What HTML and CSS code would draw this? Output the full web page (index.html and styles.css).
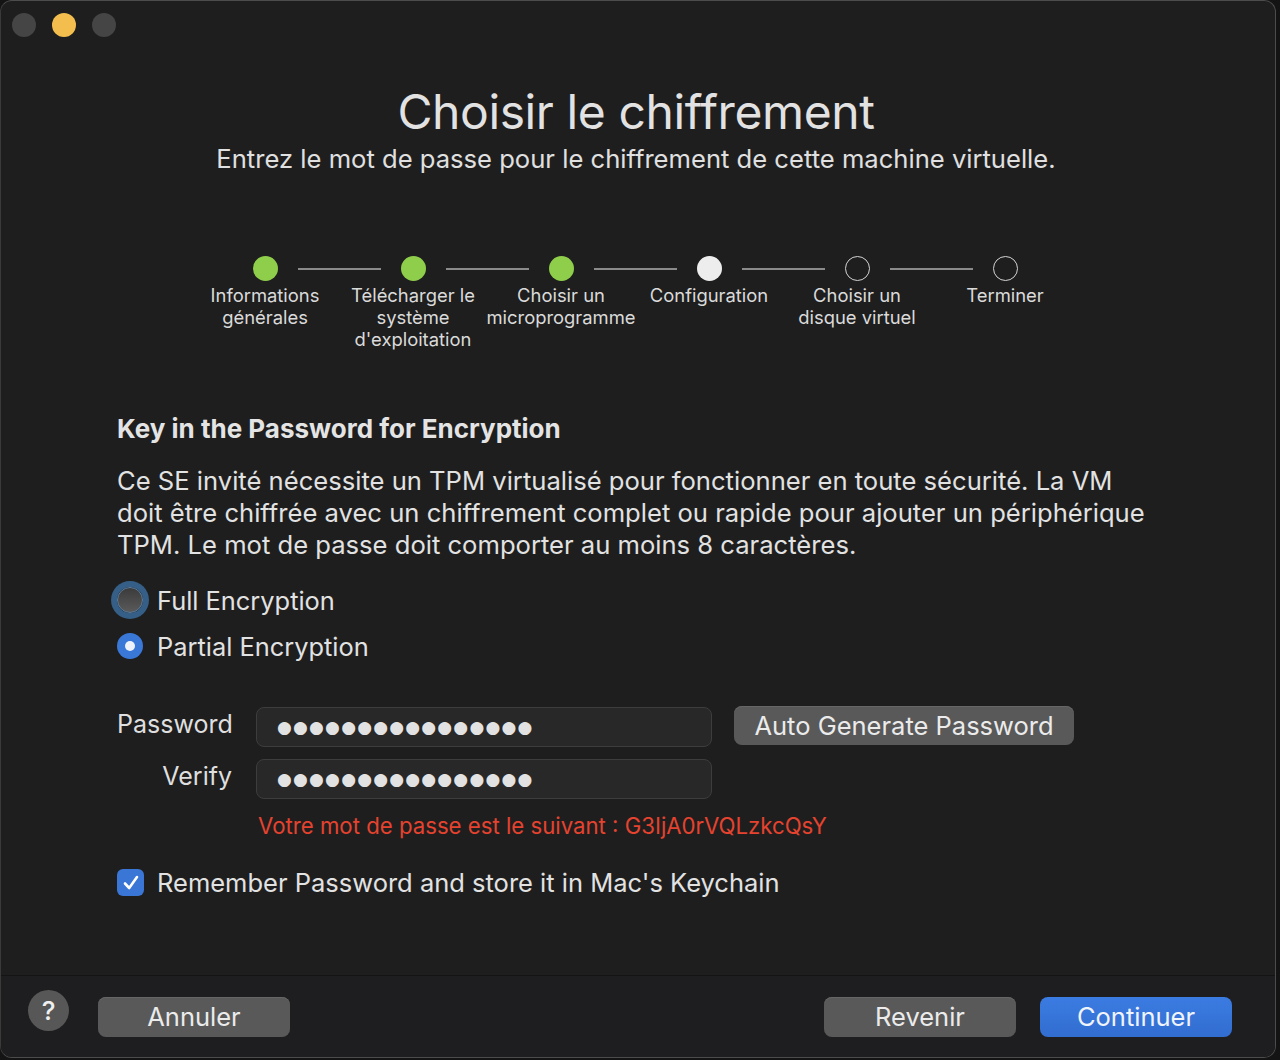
FILE: index.html
```html
<!DOCTYPE html>
<html lang="fr">
<head>
<meta charset="utf-8">
<title>Choisir le chiffrement</title>
<link rel="stylesheet" href="styles.css">
</head>
<body>
<div class="window">
  <div class="titlebar">
    <span class="light light-gray"></span>
    <span class="light light-yellow"></span>
    <span class="light light-gray"></span>
  </div>

  <div class="content">
    <header class="header">
      <h1 class="title">Choisir le chiffrement</h1>
      <p class="subtitle">Entrez le mot de passe pour le chiffrement de cette machine virtuelle.</p>
    </header>

    <ol class="steps">
      <li class="step done first"><div class="step-top"><span class="dot"></span></div><div class="step-label">Informations générales</div></li>
      <li class="step done"><div class="step-top"><span class="dot"></span></div><div class="step-label">Télécharger le système d'exploitation</div></li>
      <li class="step done"><div class="step-top"><span class="dot"></span></div><div class="step-label">Choisir un microprogramme</div></li>
      <li class="step current"><div class="step-top"><span class="dot"></span></div><div class="step-label">Configuration</div></li>
      <li class="step todo"><div class="step-top"><span class="dot"></span></div><div class="step-label">Choisir un disque virtuel</div></li>
      <li class="step todo last"><div class="step-top"><span class="dot"></span></div><div class="step-label">Terminer</div></li>
    </ol>

    <section class="form">
      <h2 class="form-title">Key in the Password for Encryption</h2>
      <p class="form-text">Ce SE invité nécessite un TPM virtualisé pour fonctionner en toute sécurité. La VM doit être chiffrée avec un chiffrement complet ou rapide pour ajouter un périphérique TPM. Le mot de passe doit comporter au moins 8 caractères.</p>

      <div class="radios">
        <label class="radio-row"><span class="radio radio-focus"><span class="radio-inner"></span></span><span class="radio-text">Full Encryption</span></label>
        <label class="radio-row"><span class="radio radio-on"><span class="radio-dot"></span></span><span class="radio-text">Partial Encryption</span></label>
      </div>

      <div class="fields">
        <div class="field-row">
          <span class="field-label">Password</span>
          <div class="input">●●●●●●●●●●●●●●●●</div>
          <button class="btn btn-gray btn-auto">Auto Generate Password</button>
        </div>
        <div class="field-row">
          <span class="field-label">Verify</span>
          <div class="input">●●●●●●●●●●●●●●●●</div>
        </div>
        <div class="hint">Votre mot de passe est le suivant : G3IjA0rVQLzkcQsY</div>
      </div>

      <label class="check-row">
        <span class="checkbox"><svg width="20" height="20" viewBox="0 0 20 20"><path d="M4 10.5 L8.2 15 L16 4" fill="none" stroke="#ffffff" stroke-width="2.6" stroke-linecap="round" stroke-linejoin="round"/></svg></span>
        <span class="check-text">Remember Password and store it in Mac's Keychain</span>
      </label>
    </section>
  </div>

  <footer class="footer">
    <button class="help">?</button>
    <button class="btn btn-gray btn-foot">Annuler</button>
    <div class="spacer"></div>
    <button class="btn btn-gray btn-foot">Revenir</button>
    <button class="btn btn-blue btn-foot">Continuer</button>
  </footer>
</div>
</body>
</html>
```

FILE: styles.css
```css
* { box-sizing: border-box; }

html, body {
  margin: 0;
  padding: 0;
}

body {
  background: #141414;
  width: 1280px;
  height: 1060px;
  overflow: hidden;
  font-family: Inter, "Noto Sans", "Liberation Sans", sans-serif;
  color: #e3e3e3;
}

.window {
  width: 1276px;
  height: 1058px;
  background: #1e1e1e;
  border: 1px solid #4c4c4c;
  border-left-color: #3a3a3a;
  border-radius: 12px;
  display: flex;
  flex-direction: column;
  overflow: hidden;
}

.titlebar {
  height: 47px;
  display: flex;
  align-items: center;
  gap: 16px;
  padding-left: 11px;
  flex: none;
}

.light {
  width: 24px;
  height: 24px;
  border-radius: 50%;
}
.light-gray { background: #454545; }
.light-yellow { background: #f4be4f; }

.content {
  flex: 1;
  display: flex;
  flex-direction: column;
}

.header {
  text-align: center;
  padding-right: 4px;
}

.title {
  margin: 34px 0 0;
  font-size: 48px;
  line-height: 60px;
  font-weight: 400;
  color: #e2e2e2;
  letter-spacing: -0.4px;
}

.subtitle {
  margin: 2px 0 0;
  font-size: 25.6px;
  line-height: 30px;
  color: #e0e0e0;
}

.steps {
  list-style: none;
  margin: 82px 0 0 190px;
  padding: 0;
  display: flex;
  width: 888px;
}

.step {
  width: 148px;
  display: flex;
  flex-direction: column;
  align-items: center;
}

.step-top {
  width: 148px;
  display: flex;
  align-items: center;
}

.step-top::before,
.step-top::after {
  content: "";
  flex: 1;
  height: 2px;
  background: #8a8a8a;
}
.step-top::before { margin-right: 20px; }
.step-top::after { margin-left: 20px; }
.first .step-top::before,
.last .step-top::after { visibility: hidden; }

.dot {
  width: 25px;
  height: 25px;
  border-radius: 50%;
  flex: none;
}
.done .dot { background: #8fce4b; }
.current .dot { background: #ededed; }
.todo .dot { border: 1.5px solid #d4d4d4; }

.step-label {
  margin-top: 3px;
  width: 150px;
  margin-left: -1px;
  margin-right: -1px;
  text-align: center;
  font-size: 18.4px;
  line-height: 22px;
  color: #dadada;
}

.form {
  padding-left: 116px;
  margin-top: 63px;
}

.form-title {
  margin: 0;
  font-size: 26px;
  line-height: 32px;
  font-weight: 700;
  color: #e4e4e4;
}

.form-text {
  margin: 20px 0 0;
  width: 1045px;
  font-size: 25.6px;
  line-height: 32px;
  color: #e2e2e2;
}

.radios {
  margin-top: 26px;
  display: flex;
  flex-direction: column;
  gap: 20px;
}

.radio-row {
  display: flex;
  align-items: center;
  height: 26px;
}

.radio {
  width: 26px;
  height: 26px;
  border-radius: 50%;
  margin-right: 14px;
  display: flex;
  align-items: center;
  justify-content: center;
  flex: none;
}

.radio-focus {
  background: linear-gradient(#3b3b3b, #5a5a5a);
  border: 1px solid #5b7fa5;
  box-shadow: 0 0 0 6px #355f86;
}

.radio-on {
  background: #3a78d8;
}

.radio-dot {
  width: 10px;
  height: 10px;
  border-radius: 50%;
  background: #eef2fb;
}

.radio-text {
  font-size: 25.4px;
  color: #e2e2e2;
}

.fields {
  margin-top: 48px;
  display: flex;
  flex-direction: column;
  gap: 12px;
}

.field-row {
  display: flex;
  align-items: center;
}

.field-label {
  width: 115px;
  text-align: right;
  font-size: 25px;
  color: #dfdfdf;
  margin-top: -7px;
}

.input {
  margin-left: 24px;
  width: 456px;
  height: 40px;
  background: #282828;
  border: 1px solid #3d3d3d;
  border-radius: 8px;
  padding-left: 20px;
  font-family: "DejaVu Sans", sans-serif;
  font-size: 17px;
  letter-spacing: 1.2px;
  line-height: 38px;
  color: #e2e2e2;
}

.btn {
  border: none;
  border-radius: 8px;
  font-family: inherit;
  color: #ebebeb;
  height: 39px;
  font-size: 25.5px;
  padding: 0;
}

.btn-gray {
  background: #595959;
  box-shadow: inset 0 1px 0 #666;
}

.btn-blue {
  background: linear-gradient(#3b7ce2, #326dd0);
  color: #f0f4fb;
}

.btn-auto {
  margin-left: 22px;
  width: 340px;
  margin-top: -4px;
}

.hint {
  margin-left: 141px;
  margin-top: 1px;
  font-size: 22.2px;
  color: #e5432f;
}

.check-row {
  margin-top: 28px;
  display: flex;
  align-items: center;
}

.checkbox {
  width: 27px;
  height: 27px;
  border-radius: 6px;
  background: #3a76d6;
  display: flex;
  align-items: center;
  justify-content: center;
  margin-right: 13px;
}

.check-text {
  font-size: 25.5px;
  color: #e2e2e2;
}

.footer {
  flex: none;
  height: 82px;
  border-top: 1px solid #141414;
  background: #1e1e20;
  display: flex;
  align-items: center;
  padding: 0 43px 0 27px;
}

.help {
  width: 41px;
  height: 41px;
  border-radius: 50%;
  border: none;
  background: #575757;
  color: #f0f0f0;
  font-family: inherit;
  font-size: 26px;
  font-weight: 500;
  padding: 0;
  margin-top: -12px;
}

.btn-foot {
  width: 192px;
  height: 40px;
}

.help + .btn-foot { margin-left: 29px; }

.spacer { flex: 1; }

.btn-blue { margin-left: 24px; }
```
